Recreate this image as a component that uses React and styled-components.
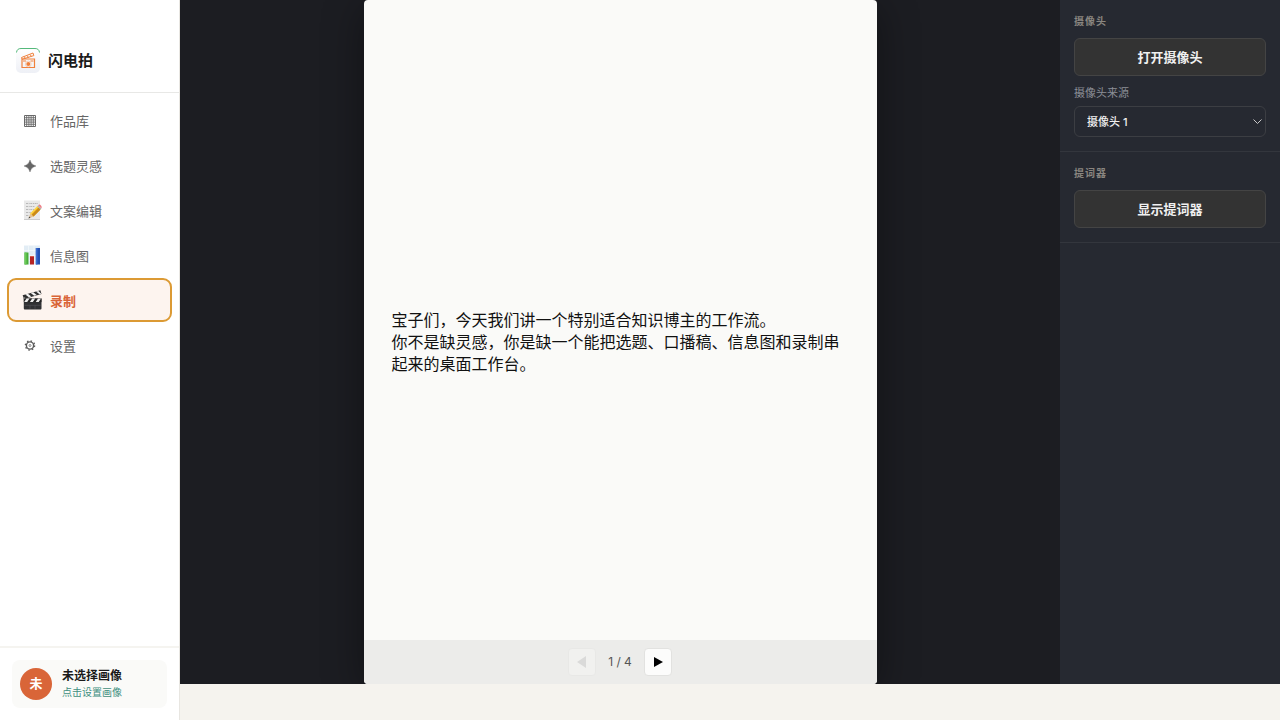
import React, { useState } from 'react';
import styled, { createGlobalStyle, css } from 'styled-components';

const GlobalStyle = createGlobalStyle`
  *, *::before, *::after {
    box-sizing: border-box;
  }

  body {
    margin: 0;
    background-color: #f5f3ee;
    color: #1a1a1a;
    font-family: Inter, 'Noto Sans CJK SC', sans-serif;
    font-size: 13px;
  }

  button, select {
    font-family: inherit;
  }

  p, h1, h2 {
    margin: 0;
  }
`;

const Page = styled.div`
  display: flex;
  align-items: flex-start;
  min-height: 100vh;
`;

/* Sidebar */

const Sidebar = styled.aside`
  display: flex;
  flex-direction: column;
  flex: 0 0 180px;
  min-height: 100vh;
  background-color: #ffffff;
  border-right: 1px solid #e8e6e1;
`;

const Brand = styled.header`
  display: flex;
  align-items: center;
  gap: 8px;
  padding: 48px 16px 18px;
  border-bottom: 1px solid #e8e8e6;
`;

const BrandName = styled.h1`
  font-size: 15px;
  font-weight: 700;
  line-height: 26px;
`;

const Nav = styled.nav`
  display: flex;
  flex-direction: column;
  flex: 1;
  gap: 3px;
  padding: 6px 8px;
`;

const NavLink = styled.a`
  display: flex;
  align-items: center;
  gap: 8px;
  height: 42px;
  padding: 0 14px;
  border-radius: 8px;
  color: #666666;
  font-size: 13px;
  text-decoration: none;

  ${({ $active }) =>
    $active &&
    css`
      background-color: #fdf4ef;
      color: #d96538;
      font-weight: 600;
      outline: 2px solid #dc9a34;
      outline-offset: -1px;
    `}
`;

const NavIcon = styled.svg`
  flex-shrink: 0;
  width: 20px;
  height: 20px;
`;

const SidebarFooter = styled.footer`
  padding: 12px;
  border-top: 2px solid #f5f4f0;
`;

const Profile = styled.button`
  display: flex;
  align-items: center;
  gap: 10px;
  width: 100%;
  padding: 8px;
  border: 0;
  border-radius: 8px;
  background-color: #fafaf8;
  color: #1a1a1a;
  text-align: left;
`;

const Avatar = styled.span`
  width: 32px;
  height: 32px;
  border-radius: 50%;
  background-color: #d96538;
  color: #ffffff;
  font-size: 13px;
  font-weight: 700;
  line-height: 31px;
  text-align: center;
`;

const ProfileText = styled.span`
  display: flex;
  flex-direction: column;
`;

const ProfileName = styled.span`
  font-size: 12px;
  font-weight: 600;
  line-height: 16px;
`;

const ProfileHint = styled.span`
  color: #3f8f80;
  font-size: 10px;
  line-height: 16px;
`;

/* Recording stage */

const Studio = styled.div`
  display: flex;
  flex: 1;
  height: calc(100vh - 36px);
  background-color: #1c1d22;
`;

const Stage = styled.main`
  display: flex;
  flex: 1;
  justify-content: center;
  overflow: hidden;
`;

const Slide = styled.section`
  display: flex;
  flex-direction: column;
  height: 100%;
  aspect-ratio: 3 / 4;
  border-radius: 4px;
  background-color: #fafaf8;
  box-shadow: 0 8px 40px rgba(0, 0, 0, 0.4);
  overflow: hidden;
`;

const SlideBody = styled.div`
  display: flex;
  flex: 1;
  flex-direction: column;
  justify-content: center;
  padding: 44px 28px 0;
`;

const SlideText = styled.p`
  color: #111111;
  font-size: 16px;
  line-height: 22px;
`;

const Pager = styled.div`
  display: flex;
  align-items: center;
  justify-content: center;
  gap: 12px;
  height: 44px;
  background-color: #ececea;
`;

const PageButton = styled.button`
  display: flex;
  align-items: center;
  justify-content: center;
  width: 28px;
  height: 28px;
  padding: 0;
  border: 1px solid #e2e2e0;
  border-radius: 4px;
  background-color: #fcfcfb;
  color: #000000;

  &:disabled {
    opacity: 0.35;
    color: #bbbbbb;
  }
`;

const PageCount = styled.span`
  color: #555555;
  font-size: 12px;
  line-height: 18px;
`;

/* Settings panel */

const Panel = styled.aside`
  flex: 0 0 220px;
  background-color: #262931;
`;

const PanelSection = styled.section`
  display: flex;
  flex-direction: column;
  padding: 14px;
  border-bottom: 1px solid #33363d;
`;

const PanelTitle = styled.h2`
  margin-bottom: 10px;
  color: #8a8680;
  font-size: 10px;
  font-weight: 700;
  letter-spacing: 1px;
  line-height: 14px;
`;

const PanelButton = styled.button`
  height: 38px;
  padding: 0 12px 2px;
  border: 1px solid #444444;
  border-radius: 6px;
  background-color: #333333;
  color: #f0f0f0;
  font-size: 13px;
  font-weight: 600;
`;

const FieldLabel = styled.label`
  margin: 9px 0 5px;
  color: #8b8e96;
  font-size: 11px;
  line-height: 16px;
`;

const SelectBox = styled.div`
  display: flex;
  position: relative;
`;

const Select = styled.select`
  flex: 1;
  height: 31px;
  padding: 0 12px;
  border: 1px solid #3c3e43;
  border-radius: 6px;
  appearance: none;
  background-color: #262931;
  color: #f0f0f0;
  font-size: 11px;
  font-weight: 500;
`;

const Chevron = styled.svg`
  position: absolute;
  top: 10px;
  right: 3px;
  width: 11px;
  height: 11px;
  pointer-events: none;
`;

const Logo = () => (
  <svg width="24" height="26" viewBox="0 0 24 26" aria-hidden="true">
    <defs>
      <linearGradient id="logoFill" x1="0" y1="0" x2="0" y2="1">
        <stop offset="0" stopColor="#ffffff" />
        <stop offset="1" stopColor="#eef0f6" />
      </linearGradient>
    </defs>
    <rect width="24" height="25" rx="5" fill="url(#logoFill)" />
    <path d="M.5 4.500A4.500 4.500 0 0 1 5 .5h14a4.500 4.500 0 0 1 4.500 4" fill="none" stroke="#55b97b" />
    <g fill="none" stroke="#f0813c">
      <path d="M6 11h12.500v8.500H6z" strokeWidth="1.200" />
      <path d="M5.500 9.500 17 5l.8 2.600L6.200 11.300z" />
      <path d="m8 8.500 1.500 2M11 7.500l1.500 2M14 6.500l1.500 2M7 13h3M14.500 13h3" />
    </g>
    <circle cx="12.300" cy="16" r="2" fill="#f0813c" />
    <circle cx="12.300" cy="16" r="2.900" fill="none" stroke="#f7b98f" strokeWidth=".6" />
  </svg>
);

const GridIcon = () => (
  <NavIcon viewBox="0 0 20 20" fill="none" stroke="#6a6a6a">
    <path d="M2.500 5.500h11v11h-11z" />
    <path d="M4.700 5v12M6.900 5v12M9.100 5v12M11.300 5v12M2 7.700h12M2 9.900h12M2 12.100h12M2 14.300h12" strokeWidth=".9" />
  </NavIcon>
);

const SparkIcon = () => (
  <NavIcon viewBox="0 0 20 20">
    <path
      d="M8 5c1.200 3.600 2.400 4.800 6 6-3.600 1.200-4.800 2.400-6 6-1.200-3.600-2.400-4.800-6-6 3.600-1.200 4.800-2.400 6-6z"
      fill="#666666"
      stroke="#666666"
      strokeWidth=".4"
    />
  </NavIcon>
);

const MemoIcon = () => (
  <NavIcon viewBox="0 0 20 20">
    <path d="M2 .5h16v19H2z" fill="#e9e9e9" />
    <path d="M2 19.500h16" stroke="#cccccc" />
    <path
      d="M4 3.500h12M4 6.500h9M4 9.500h8M4 12.500h5M4 15.500h3"
      fill="none"
      stroke="#b8b8b8"
      strokeDasharray="2 .7 1 .6"
    />
    <path d="m6.500 18.500 1.800-5.100 3.300 3.100z" fill="#e6c391" />
    <path d="m6.500 18.500.7-2 1.300 1.200z" fill="#444444" />
    <path d="m8.300 13.400 7-7.200 3.200 3.200-6.900 7.100z" fill="#f2b91f" />
    <path d="m9.800 14.800 7-7.200 1.700 1.800-6.900 7.100z" fill="#c9891a" />
    <path d="m8.300 13.400 7-7.200.8.800-7 7.200z" fill="#ffdc57" />
    <path d="m15.300 6.200.9-.9 3.100 3.100-.8 1z" fill="#a9b3b5" />
    <path d="m16.200 5.300.6-.5c1-.8 3.200 1.300 2.900 2.700l-.4.900z" fill="#ed7f86" />
  </NavIcon>
);

const ChartIcon = () => (
  <NavIcon viewBox="0 0 20 20">
    <path d="M2 .5h16v19H2z" fill="#e2edf5" />
    <path d="M2 5.500h16M2 10.500h16M2 15.500h16M6.500.5v19M12 .5v19" stroke="#f5f9fc" strokeWidth=".7" />
    <path d="M2.500 7.500h4v12h-4z" fill="#48ad3c" />
    <path d="M2.500 7.500h2v12h-2z" fill="#6cca58" />
    <path d="M8 11h4v8.500H8z" fill="#b62424" />
    <path d="M8 11h4v1H8z" fill="#d65a4c" />
    <path d="M13.700 3H18v16.500h-4.300z" fill="#2351b5" />
    <path d="M14 3h1.500v16.500H14z" fill="#3b6dd0" />
  </NavIcon>
);

const ClapperIcon = () => (
  <NavIcon viewBox="0 0 20 20">
    <path d="m.6 5.200 17.800-4.900 1.100 3.800L2.200 9z" fill="#303030" />
    <path
      d="m3.300 4.500 3.500 2.800 2.500-.7-3.400-2.800zM8.700 3l3.500 2.800 2.500-.7L11.200 2.300zM14 1.500l3.500 2.800 1.800-.5-2.900-2.900z"
      fill="#f4f4f4"
    />
    <path d="M1.800 8.500h17.700v9.700c0 .7-.4 1.300-1.200 1.300H3c-.8 0-1.200-.6-1.200-1.300z" fill="#303134" />
    <path d="M1.800 8.500h17.700v3.600H1.800z" fill="#242424" />
    <path d="m4.500 8.500-2.300 3.600h3l2.300-3.600zM10.200 8.500l-2.300 3.600h3l2.300-3.600zM16 8.500l-2.300 3.600h3L19 8.500z" fill="#eeeeee" />
    <path d="M2.500 15.300h16.300M8 15.300v3.500M13 15.300v3.500" stroke="#55565a" strokeWidth=".6" />
    <circle cx="2.300" cy="8" r="1" fill="#777777" />
  </NavIcon>
);

const GearIcon = () => (
  <NavIcon viewBox="0 0 20 20" fill="none" stroke="#5c5c5c">
    <circle cx="8" cy="10.500" r="3.600" strokeWidth="1.400" />
    <circle cx="8" cy="10.500" r="1" strokeWidth=".7" />
    <circle cx="8" cy="10.500" r="4.600" strokeWidth="1.400" strokeDasharray="1.500 2.113" />
  </NavIcon>
);

const navItems = [
  { label: '作品库', Icon: GridIcon },
  { label: '选题灵感', Icon: SparkIcon },
  { label: '文案编辑', Icon: MemoIcon },
  { label: '信息图', Icon: ChartIcon },
  { label: '录制', Icon: ClapperIcon },
  { label: '设置', Icon: GearIcon },
];

const pageTotal = 4;

const App = () => {
  const [active, setActive] = useState('录制');
  const [page, setPage] = useState(1);

  return (
    <>
      <GlobalStyle />
      <Page>
        <Sidebar>
          <Brand>
            <Logo />
            <BrandName>闪电拍</BrandName>
          </Brand>
          <Nav>
            {navItems.map(({ label, Icon }) => (
              <NavLink
                key={label}
                href="#"
                $active={label === active}
                onClick={() => setActive(label)}
              >
                <Icon />
                {label}
              </NavLink>
            ))}
          </Nav>
          <SidebarFooter>
            <Profile type="button">
              <Avatar>未</Avatar>
              <ProfileText>
                <ProfileName>未选择画像</ProfileName>
                <ProfileHint>点击设置画像</ProfileHint>
              </ProfileText>
            </Profile>
          </SidebarFooter>
        </Sidebar>
        <Studio>
          <Stage>
            <Slide>
              <SlideBody>
                <SlideText>宝子们，今天我们讲一个特别适合知识博主的工作流。</SlideText>
                <SlideText>
                  你不是缺灵感，你是缺一个能把选题、口播稿、信息图和录制串起来的桌面工作台。
                </SlideText>
              </SlideBody>
              <Pager>
                <PageButton
                  type="button"
                  aria-label="上一页"
                  disabled={page === 1}
                  onClick={() => setPage(page - 1)}
                >
                  <svg width="10" height="12" viewBox="0 0 10 12">
                    <path d="M9 0v12L0 6z" fill="currentColor" />
                  </svg>
                </PageButton>
                <PageCount>
                  {page} / {pageTotal}
                </PageCount>
                <PageButton
                  type="button"
                  aria-label="下一页"
                  disabled={page === pageTotal}
                  onClick={() => setPage(page + 1)}
                >
                  <svg width="10" height="12" viewBox="0 0 10 12">
                    <path d="M1 1v10l9-5z" fill="currentColor" />
                  </svg>
                </PageButton>
              </Pager>
            </Slide>
          </Stage>
          <Panel>
            <PanelSection>
              <PanelTitle>摄像头</PanelTitle>
              <PanelButton type="button">打开摄像头</PanelButton>
              <FieldLabel htmlFor="camera">摄像头来源</FieldLabel>
              <SelectBox>
                <Select id="camera">
                  <option>摄像头 1</option>
                </Select>
                <Chevron viewBox="0 0 11 11" fill="none" stroke="#c8c8c8">
                  <path d="m1.500 3.500 4 4 4-4" />
                </Chevron>
              </SelectBox>
            </PanelSection>
            <PanelSection>
              <PanelTitle>提词器</PanelTitle>
              <PanelButton type="button">显示提词器</PanelButton>
            </PanelSection>
          </Panel>
        </Studio>
      </Page>
    </>
  );
};

export default App;
